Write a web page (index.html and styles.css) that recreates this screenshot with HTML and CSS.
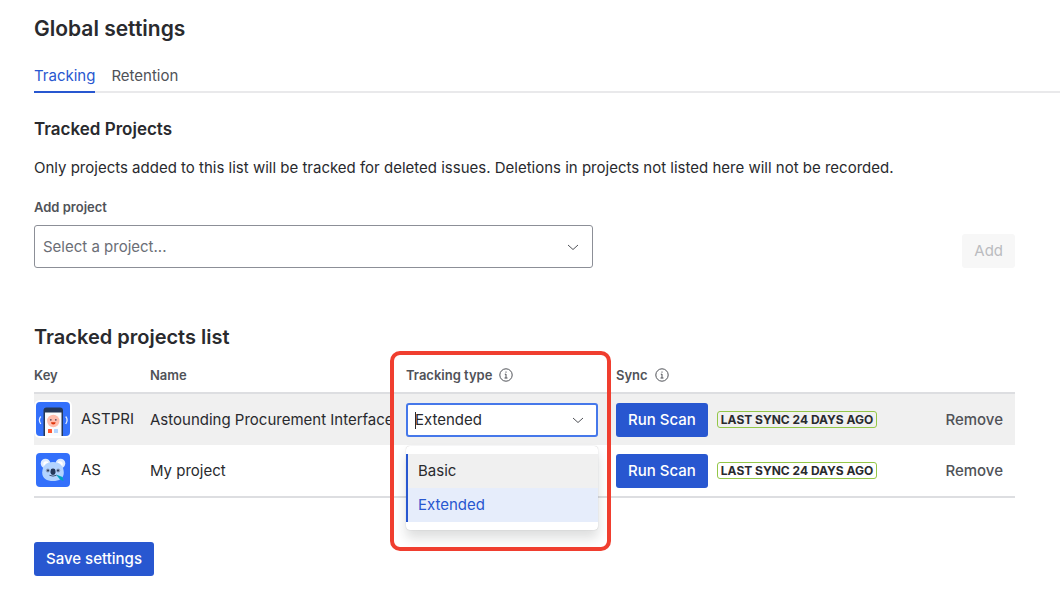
FILE: index.html
```html
<!DOCTYPE html>
<html lang="en">
<head>
<meta charset="UTF-8" />
<meta name="viewport" content="width=device-width, initial-scale=1" />
<title>Global settings</title>
<link rel="stylesheet" href="styles.css">
</head>
<body>

<main class="page">
  <h1>Global settings</h1>

  <nav class="tabs">
    <a class="tab active" href="#tracking">Tracking</a>
    <a class="tab" href="#retention">Retention</a>
  </nav>

  <section class="content">
    <h3>Tracked Projects</h3>
    <p class="intro">Only projects added to this list will be tracked for deleted issues. Deletions in projects not listed here will not be recorded.</p>

    <label class="field-label" for="project-select">Add project</label>
    <div class="add-row">
      <div class="select-box project-box">
        <select id="project-select">
          <option>Select a project...</option>
        </select>
        <svg class="chevron" viewBox="0 0 12 12"><path d="M1 4L6 8.500L11 4" /></svg>
      </div>
      <button class="btn" type="button" disabled>Add</button>
    </div>

    <h2>Tracked projects list</h2>
    <table class="projects">
      <colgroup>
        <col class="col-key"><col class="col-name"><col class="col-type"><col><col class="col-action">
      </colgroup>
      <thead>
        <tr>
          <th>Key</th>
          <th>Name</th>
          <th class="type-head">
            <span class="head">Tracking type
              <svg class="info" viewBox="0 0 14 14"><circle cx="7" cy="7" r="6.200" /><path d="M7 6V10.200M5.800 6.200H7M7 3.500V4.700M5.500 10H8.500" /></svg>
            </span>
            <div class="highlight"></div>
          </th>
          <th>
            <span class="head">Sync
              <svg class="info" viewBox="0 0 14 14"><circle cx="7" cy="7" r="6.200" /><path d="M7 6V10.200M5.800 6.200H7M7 3.500V4.700M5.500 10H8.500" /></svg>
            </span>
          </th>
          <th></th>
        </tr>
      </thead>
      <tbody>
        <tr class="current">
          <td>
            <div class="key">
              <svg class="avatar framed" viewBox="0 0 34 34">
                <rect width="34" height="34" fill="#3370fb" />
                <path d="M7.500 34V8.500a3 3 0 0 1 3-3h13.500a3 3 0 0 1 3 3V34z" fill="#253858" />
                <path d="M9 10.500h16.500V34H9z" fill="#fafbfc" />
                <circle cx="17.300" cy="19" r="6.200" fill="#ffbdad" />
                <circle cx="14.800" cy="17.800" r="0.900" fill="#5e4a5c" />
                <circle cx="19.800" cy="17.800" r="0.900" fill="#5e4a5c" />
                <path d="M15 20.300h4.600a2.300 2.300 0 0 1-4.600 0z" fill="#de350b" />
                <rect x="12" y="27" width="4" height="4" rx="0.500" fill="#ff5630" />
                <rect x="18" y="27" width="4" height="4" rx="0.500" fill="#b3d4ff" />
                <path d="M4.800 14.500q-2.800 3.500 0 7.500M29.700 14.500q2.800 3.500 0 7.500" fill="none" stroke="#deebff" stroke-width="1.300" />
              </svg>
              <span>ASTPRI</span>
            </div>
          </td>
          <td>Astounding Procurement Interface</td>
          <td>
            <div class="select-box type-box">
              <select aria-label="Tracking type">
                <option>Basic</option>
                <option selected>Extended</option>
              </select>
              <span class="caret"></span>
              <svg class="chevron" viewBox="0 0 12 12"><path d="M1 4L6 8.500L11 4" /></svg>
              <div class="menu">
                <ul class="options" role="listbox" aria-label="Tracking type">
                  <li class="option focused" role="option">Basic</li>
                  <li class="option selected" role="option" aria-selected="true">Extended</li>
                </ul>
              </div>
            </div>
          </td>
          <td>
            <div class="sync">
              <button class="btn primary" type="button">Run Scan</button>
              <span class="badge">Last sync 24 days ago</span>
            </div>
          </td>
          <td><button class="btn link" type="button">Remove</button></td>
        </tr>
        <tr>
          <td>
            <div class="key">
              <svg class="avatar" viewBox="0 0 34 34">
                <rect width="34" height="34" fill="#3370fb" />
                <circle cx="9.500" cy="10.500" r="4.800" fill="#deebff" />
                <circle cx="24.500" cy="10.500" r="4.800" fill="#deebff" />
                <circle cx="10" cy="11" r="2.700" fill="#fff" />
                <circle cx="24" cy="11" r="2.700" fill="#fff" />
                <path d="M17 9c7 0 10.500 4 10.800 10.500C28 25.500 23 28 17 28S6 25.500 6.200 19.500C6.500 13 10 9 17 9z" fill="#b3d4ff" />
                <circle cx="11.800" cy="17.500" r="2" fill="#8c9fc0" />
                <circle cx="22.200" cy="17.500" r="2" fill="#8c9fc0" />
                <circle cx="12" cy="17.500" r="1" fill="#253858" />
                <circle cx="22" cy="17.500" r="1" fill="#253858" />
                <rect x="14.500" y="15.500" width="5" height="6.500" rx="2.400" fill="#253858" />
                <path d="M13.500 22.300q3.500 1.600 7 0" fill="none" stroke="#344563" stroke-width="0.900" />
                <path d="M20 21.500l6.500 2.500 1 4-3.500-1.500z" fill="#00a3bf" />
              </svg>
              <span>AS</span>
            </div>
          </td>
          <td>My project</td>
          <td></td>
          <td>
            <div class="sync">
              <button class="btn primary" type="button">Run Scan</button>
              <span class="badge">Last sync 24 days ago</span>
            </div>
          </td>
          <td><button class="btn link" type="button">Remove</button></td>
        </tr>
      </tbody>
    </table>

    <button class="btn primary" type="button">Save settings</button>
  </section>
</main>

</body>
</html>
```

FILE: styles.css
```css
* {
  box-sizing: border-box;
}
body {
  margin: 0;
  background: #fff;
  color: #292a2e;
  font-family: Inter, "Liberation Sans", sans-serif;
  font-size: 15px;
  line-height: 20px;
}
.page {
  padding: 17px 0 32px 34px;
}
.content {
  padding-right: 45px;
}
h1, h2, h3, p {
  margin: 0;
}
h1, h2 {
  font-size: 21px;
  line-height: 24px;
  font-weight: 600;
}
h2 {
  font-size: 20px;
}
h3 {
  font-size: 17px;
  line-height: 20px;
  font-weight: 600;
}

/* tabs */
.tabs {
  display: flex;
  gap: 16px;
  margin: 21px 0 26px;
  border-bottom: 2px solid #e9e9eb;
}
.tab {
  margin-bottom: -2px;
  padding: 4px 0 5px;
  border-bottom: 2px solid transparent;
  color: #505258;
  text-decoration: none;
}
.tab.active {
  color: #2857d0;
  border-bottom-color: #2857d0;
}

/* add project */
.intro {
  margin: 19px 0;
}
.field-label {
  display: block;
  margin-bottom: 8px;
  color: #505258;
  font-size: 13px;
  font-weight: 600;
}
.add-row {
  display: flex;
  justify-content: space-between;
  align-items: flex-end;
  margin-bottom: 57px;
}
.select-box {
  position: relative;
}
.select-box select {
  display: block;
  width: 100%;
  margin: 0;
  appearance: none;
  background: #fff;
  color: inherit;
  font: inherit;
  border-radius: 3px;
}
.project-box {
  width: 57%;
}
.project-box select {
  height: 43px;
  padding: 0 8px;
  border: 1px solid #8c8f97;
  color: #6b6e76;
}
.chevron {
  position: absolute;
  top: 50%;
  right: 14px;
  width: 12px;
  height: 12px;
  margin-top: -6px;
  fill: none;
  stroke: #505258;
  pointer-events: none;
}

/* buttons */
.btn {
  height: 34px;
  padding: 0 12px;
  border: none;
  border-radius: 3px;
  background: #f7f7f7;
  color: #505258;
  font: inherit;
  font-weight: 500;
  cursor: pointer;
}
.btn:disabled {
  color: #bbbcc0;
  font-weight: 400;
  cursor: not-allowed;
}
.btn.primary {
  background: #2857d0;
  color: #fff;
}
.btn.link {
  background: none;
}

/* projects table */
.projects {
  width: 100%;
  margin: 8px 0 44px;
  table-layout: fixed;
  border-collapse: separate;
  border-spacing: 0;
  border-bottom: 2px solid #dddee1;
  white-space: nowrap;
}
.col-key {
  width: 116px;
}
.col-name {
  width: 256px;
}
.col-type {
  width: 210px;
}
.col-action {
  width: 90px;
}
.projects th {
  height: 37px;
  padding: 0;
  border-bottom: 2px solid #dddee1;
  color: #505258;
  font-size: 13px;
  font-weight: 600;
  text-align: left;
}
.projects td {
  height: 51px;
  padding: 0;
}
.projects td:last-child {
  text-align: right;
}
.current {
  background: #f0f0f0;
}
.head {
  display: flex;
  align-items: center;
  gap: 7px;
}
.info {
  width: 14px;
  height: 14px;
  fill: none;
  stroke: #505258;
}
.key {
  display: flex;
  align-items: center;
  gap: 11px;
  padding: 0 0 2px 2px;
}
.avatar {
  width: 34px;
  height: 34px;
  border-radius: 4px;
}
.avatar.framed {
  box-shadow: 0 0 0 2px #fff;
}
.sync {
  display: flex;
  align-items: center;
  gap: 9px;
}
.badge {
  padding: 0 3px;
  border: 1px solid #94c748;
  border-radius: 3px;
  font-size: 12px;
  line-height: 15px;
  font-weight: 700;
  text-transform: uppercase;
}

/* tracking type dropdown */
.type-box {
  width: 192px;
}
.type-box select {
  height: 34px;
  padding: 0 7px;
  border: 2px solid #4678ea;
}
.caret {
  position: absolute;
  top: 9px;
  left: 9px;
  width: 1px;
  height: 17px;
  background: #292a2e;
}
.menu {
  position: absolute;
  top: 43px;
  left: 0;
  z-index: 1;
  width: 100%;
  padding: 8px 0;
  border-radius: 4px;
  background: #fff;
  box-shadow: 0 8px 12px rgba(30, 31, 33, 0.15), 0 0 1px rgba(30, 31, 33, 0.3);
}
.options {
  margin: 0;
  padding: 0;
  list-style: none;
}
.option {
  padding: 7px 10px;
  border-left: 2px solid #2857d0;
}
.option.focused {
  background: #f0f0f0;
}
.option.selected {
  background: #e6edfb;
  color: #2857d0;
}

/* frame round the tracking type column */
.type-head {
  position: relative;
}
.highlight {
  position: absolute;
  top: -6px;
  left: -16px;
  z-index: 2;
  width: 221px;
  height: 200px;
  border: 4px solid #f03e2f;
  border-radius: 10px;
  pointer-events: none;
}
```
